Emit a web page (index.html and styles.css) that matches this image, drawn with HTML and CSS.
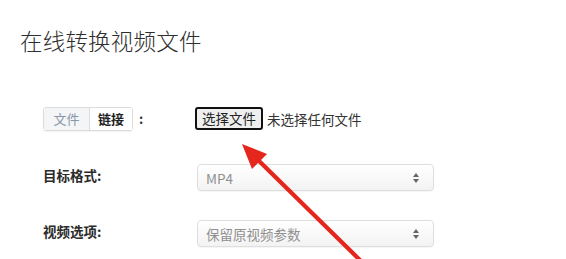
FILE: index.html
```html
<!DOCTYPE html>
<html lang="zh">
<head>
<meta charset="utf-8">
<link rel="stylesheet" href="styles.css">
</head>
<body>
<div class="page">
  <h1 class="title">在线转换视频文件</h1>
  <div class="form">
    <div class="row row-file">
      <div class="label-cell">
        <div class="toggle">
          <span class="tab tab-off">文件</span><span class="tab tab-on">链接</span>
        </div>
        <span class="colon">:</span>
      </div>
      <div class="control">
        <button class="file-btn">选择文件</button>
        <span class="file-none">未选择任何文件</span>
      </div>
    </div>
    <div class="row row-2">
      <div class="label-cell"><span class="label">目标格式:</span></div>
      <div class="control">
        <div class="select"><span class="sel-text">MP4</span><span class="sel-arrow"><i class="up"></i><i class="down"></i></span></div>
      </div>
    </div>
    <div class="row row-3">
      <div class="label-cell"><span class="label">视频选项:</span></div>
      <div class="control">
        <div class="select"><span class="sel-text">保留原视频参数</span><span class="sel-arrow"><i class="up"></i><i class="down"></i></span></div>
      </div>
    </div>
  </div>
  <svg class="arrow" width="566" height="259" viewBox="0 0 566 259">
    <line x1="366" y1="266" x2="254" y2="156" stroke="#e5261c" stroke-width="4.2" stroke-linecap="round"/>
    <polygon points="242,144 252,169 267,154" fill="#e5261c"/>
  </svg>
</div>
</body>
</html>
```
FILE: styles.css
```css
html, body {
  margin: 0;
  padding: 0;
  background: #ffffff;
}
body {
  font-family: "Noto Sans CJK SC", "Noto Sans", sans-serif;
  color: #333;
  width: 566px;
  height: 259px;
  overflow: hidden;
}
.page {
  position: relative;
  padding: 24px 0 0 20px;
}
.title {
  margin: 0;
  font-size: 22.5px;
  font-weight: 300;
  line-height: 32px;
  color: #2e2e2e;
  letter-spacing: 0.2px;
}
.form {
  margin-top: 49px;
  padding-left: 23px;
  display: flex;
  flex-direction: column;
}
.row {
  display: flex;
  align-items: center;
  height: 27px;
}
.row-2 { margin-top: 32px; }
.row-3 { margin-top: 29px; }
.label-cell {
  width: 151px;
  display: flex;
  align-items: center;
}
.row-2 .label-cell,
.row-3 .label-cell {
  margin-bottom: 6px;
}
.toggle {
  display: flex;
  border: 1px solid #dcdcdc;
  border-radius: 3px;
  height: 22px;
  box-shadow: 0 1px 1px rgba(0,0,0,0.05);
}
.tab {
  display: flex;
  align-items: center;
  justify-content: center;
  font-size: 13px;
}
.tab-off {
  color: #8a96a8;
  background: #f4f5f6;
  border-right: 1px solid #dcdcdc;
  width: 45px;
}
.tab-on {
  color: #222;
  font-weight: 700;
  background: #fff;
  width: 42px;
}
.colon {
  margin-left: 6px;
  font-size: 13px;
  font-weight: 700;
  color: #333;
}
.label {
  font-size: 13.5px;
  font-weight: 700;
  color: #2b2b2b;
}
.control {
  display: flex;
  align-items: center;
}
.file-btn {
  font-family: "Noto Sans CJK SC", sans-serif;
  font-size: 13.5px;
  color: #222;
  background: #efefef;
  border: 2px solid #111;
  border-radius: 3px;
  height: 23px;
  padding: 0 5px;
  line-height: 17px;
  margin-top: -1px;
  margin-left: 1px;
}
.file-none {
  margin-left: 4px;
  font-size: 13.5px;
  color: #333;
}
.select {
  margin-left: 3px;
  width: 237px;
  height: 27px;
  border: 1px solid #dedede;
  border-radius: 4px;
  background: linear-gradient(#ffffff, #f3f3f3);
  box-shadow: 0 1px 1px rgba(0,0,0,0.04);
  display: flex;
  align-items: center;
  justify-content: space-between;
  padding: 0 14px 0 8px;
  box-sizing: border-box;
}
.sel-text {
  font-size: 13.5px;
  color: #909090;
}
.sel-arrow {
  display: flex;
  flex-direction: column;
  gap: 2px;
}
.sel-arrow i {
  display: block;
  width: 0;
  height: 0;
  border-left: 3px solid transparent;
  border-right: 3px solid transparent;
}
.sel-arrow .up { border-bottom: 4px solid #666; }
.sel-arrow .down { border-top: 4px solid #666; }
.arrow {
  position: absolute;
  left: 0;
  top: 0;
  pointer-events: none;
}
```
